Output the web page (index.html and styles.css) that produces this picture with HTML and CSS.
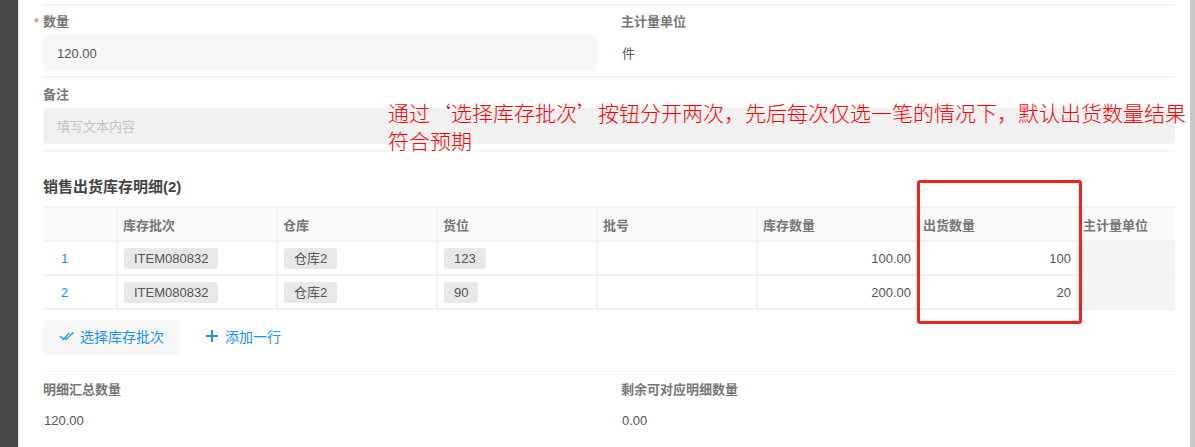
FILE: index.html
```html
<!DOCTYPE html>
<html lang="zh-CN">
<head>
    <meta charset="UTF-8">
    <title>销售出货</title>
    <link rel="stylesheet" href="styles.css">
</head>
<body>
    <div class="side"></div>
    <div class="page">
        <div class="form-row first">
            <div class="field">
                <div class="label required">数量</div>
                <div class="input">120.00</div>
            </div>
            <div class="field">
                <div class="label">主计量单位</div>
                <div class="value-box">件</div>
            </div>
        </div>
        <div class="form-row second">
            <div class="field wide">
                <div class="label">备注</div>
                <div class="input disabled">填写文本内容</div>
            </div>
        </div>

        <h2 class="title">销售出货库存明细(2)</h2>
        <table class="detail">
            <colgroup>
                <col class="c-no"><col class="c-m"><col class="c-m"><col class="c-m"><col class="c-m"><col class="c-m"><col class="c-m"><col class="c-unit">
            </colgroup>
            <thead>
                <tr>
                    <th></th>
                    <th>库存批次</th>
                    <th>仓库</th>
                    <th>货位</th>
                    <th>批号</th>
                    <th>库存数量</th>
                    <th>出货数量</th>
                    <th>主计量单位</th>
                </tr>
            </thead>
            <tbody>
                <tr>
                    <td class="no">1</td>
                    <td><span class="tag">ITEM080832</span></td>
                    <td><span class="tag">仓库2</span></td>
                    <td><span class="tag">123</span></td>
                    <td></td>
                    <td class="num">100.00</td>
                    <td class="num">100</td>
                    <td class="locked"></td>
                </tr>
                <tr>
                    <td class="no">2</td>
                    <td><span class="tag">ITEM080832</span></td>
                    <td><span class="tag">仓库2</span></td>
                    <td><span class="tag">90</span></td>
                    <td></td>
                    <td class="num">200.00</td>
                    <td class="num">20</td>
                    <td class="locked"></td>
                </tr>
            </tbody>
        </table>

        <div class="actions">
            <button class="btn btn-grey">
                <svg width="16" height="12" viewBox="0 0 16 12"><path d="M1 6l3.5 3.5L10 3M6 8.5l1 1L14.5 2.5" fill="none" stroke="#1890ff" stroke-width="1.2"/></svg>
                选择库存批次
            </button>
            <button class="btn">
                <svg width="14" height="14" viewBox="0 0 14 14"><path d="M7 1v12M1 7h12" fill="none" stroke="#1890ff" stroke-width="2"/></svg>
                添加一行
            </button>
        </div>

        <div class="form-row summary">
            <div class="field">
                <div class="label">明细汇总数量</div>
                <div class="plain">120.00</div>
            </div>
            <div class="field">
                <div class="label">剩余可对应明细数量</div>
                <div class="plain">0.00</div>
            </div>
        </div>
    </div>
    <div class="scroll"></div>

    <div class="note">通过‘选择库存批次’按钮分开两次，先后每次仅选一笔的情况下，默认出货数量结果符合预期</div>
    <div class="mark"></div>
</body>
</html>
```

FILE: styles.css
```css
body {
    margin: 0;
    height: 447px;
    overflow: hidden;
    display: flex;
    font-family: "Liberation Sans", "Noto Sans CJK SC", sans-serif;
    font-size: 13px;
    color: #555;
    background: #fff;
}
.side {
    width: 18px;
    flex: none;
    background: #4a4a4a;
    border-right: 1px solid #e4e4e4;
}
.page {
    width: 1132px;
    margin-left: 24px;
    flex: none;
}
.scroll {
    width: 5px;
    margin-left: 15px;
    flex: none;
    background: #c8c8c8;
}
.form-row {
    display: flex;
    height: 71px;
    border-bottom: 2px solid #f5f5f5;
}
.form-row.first {
    height: 70px;
    border-top: 2px solid #f5f5f5;
    margin-top: 4px;
}
.form-row.second {
    height: 72px;
}
.form-row.second .label {
    padding-top: 8px;
}
.field {
    width: 578px;
    flex: none;
}
.field.wide {
    width: 100%;
}
.label {
    font-size: 13px;
    font-weight: bold;
    line-height: 18px;
    color: #777;
    padding-top: 7px;
    position: relative;
}
.required::before {
    content: "*";
    position: absolute;
    left: -9px;
    top: 8px;
    color: #f5544d;
    font-weight: normal;
}
.input {
    width: 554px;
    height: 36px;
    line-height: 37px;
    margin-top: 4px;
    padding-left: 14px;
    box-sizing: border-box;
    background: #f7f7f7;
    border-radius: 4px;
}
.input.disabled {
    width: 100%;
    background: #f1f1f1;
    color: #c4c4c4;
}
.value-box {
    line-height: 37px;
    margin-top: 4px;
    padding-left: 1px;
}
.title {
    margin: 25px 0 9px;
    font-size: 15px;
    line-height: 20px;
    font-weight: bold;
    color: #444;
}
.detail {
    width: 1132px;
    table-layout: fixed;
    border-collapse: collapse;
}
.c-no { width: 74px; }
.c-m { width: 160px; }
.c-unit { width: 98px; }
.detail th, .detail td {
    border: 2px solid #f2f2f2;
    padding: 0 5px 0 6px;
    height: 32px;
    text-align: left;
}
.detail th {
    padding-left: 5px;
    background: #fafafa;
    font-size: 13px;
    color: #777;
    font-weight: bold;
}
.detail tr > :first-child { border-left: none; }
.detail tr > :last-child { border-right: none; }
.detail .no {
    color: #1890ff;
    padding-left: 18px;
}
.detail .num {
    text-align: right;
}
.detail .locked {
    background: #f4f4f4;
}
.tag {
    display: inline-block;
    height: 21px;
    line-height: 21px;
    padding: 0 10px;
    background: #e8e8e8;
    border-radius: 3px;
}
.actions {
    display: flex;
    gap: 8px;
    margin-top: 10px;
    padding-bottom: 19px;
    border-bottom: 1px solid #f5f5f5;
}
.btn {
    display: flex;
    align-items: center;
    gap: 5px;
    height: 35px;
    padding: 0 16px 3px;
    border: none;
    background: none;
    border-radius: 4px;
    font-family: inherit;
    font-size: 14px;
    color: #1890ff;
}
.btn-grey {
    background: #f7f7f7;
}
.btn + .btn {
    gap: 6px;
    padding-left: 17px;
}
.summary {
    height: auto;
    border: none;
}
.summary .label {
    padding-top: 6px;
}
.plain {
    line-height: 20px;
    margin-top: 12px;
    padding-left: 1px;
}
.note {
    position: absolute;
    left: 388px;
    top: 98px;
    width: 800px;
    font-family: "Noto Sans CJK SC", sans-serif;
    font-size: 21px;
    line-height: 28px;
    font-weight: 300;
    color: #f00;
}
.mark {
    position: absolute;
    left: 917px;
    top: 180px;
    width: 165px;
    height: 144px;
    box-sizing: border-box;
    border: 3px solid #f5221b;
    border-radius: 3px;
}
```
